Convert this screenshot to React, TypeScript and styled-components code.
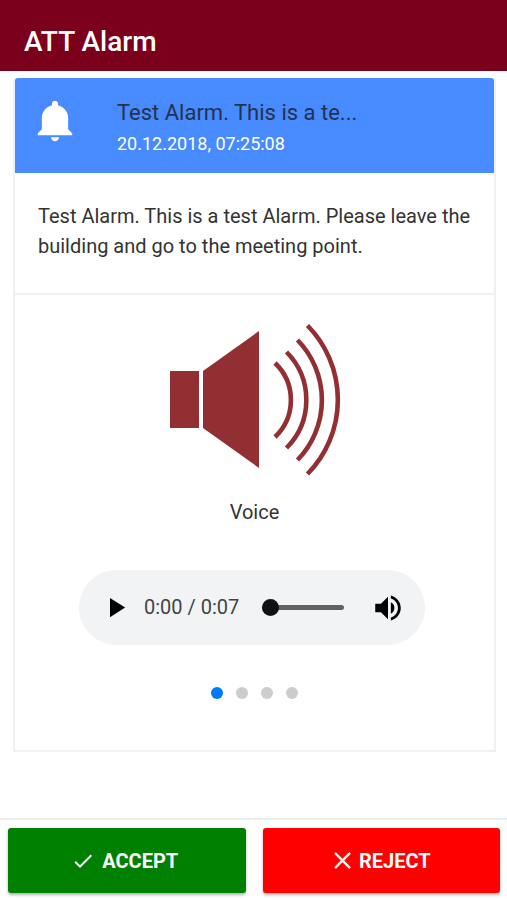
import React, { useState } from "react";
import styled, { createGlobalStyle } from "styled-components";
import { IoMdNotifications } from "react-icons/io";
import { MdCheck, MdClose, MdPlayArrow, MdVolumeUp } from "react-icons/md";

const GlobalStyle = createGlobalStyle`
  * { box-sizing: border-box; }
  body {
    margin: 0;
    background: #fff;
    color: #333;
    font-family: Roboto, "Liberation Sans", sans-serif;
  }
`;

const Page = styled.div`
  display: flex;
  flex-direction: column;
  min-height: 100vh;
`;

const TopBar = styled.header`
  padding: 24px 24px 11px;
  background: #7b001c;
`;

const AppTitle = styled.h1`
  margin: 0;
  color: #fff;
  font-size: 28px;
  font-weight: 500;
  line-height: 36px;
`;

const Content = styled.main`
  flex: 1;
  padding: 7px 11px 24px 13px;
`;

const Card = styled.article`
  border: 2px solid #f0f0f0;
  border-top: 0;
  border-radius: 4px 4px 0 0;
`;

const CardHeader = styled.header`
  display: flex;
  align-items: flex-start;
  gap: 37px;
  padding: 17px 16px 16px 15px;
  border-radius: 3px 3px 0 0;
  background: #488aff;
  color: #fff;
`;

const Bell = styled(IoMdNotifications)`
  flex: none;
  margin-top: 1px;
`;

const HeaderText = styled.div`
  display: flex;
  flex-direction: column;
  min-width: 0;
`;

const AlarmTitle = styled.h2`
  margin: 0;
  color: #24324c;
  font-size: 22px;
  font-weight: 400;
  line-height: 36px;
`;

const AlarmTime = styled.time`
  font-size: 18px;
  line-height: 26px;
`;

const Message = styled.p`
  margin: 0;
  padding: 28px 16px 32px 23px;
  border-bottom: 2px solid #f0f0f0;
  font-size: 20px;
  line-height: 30px;
`;

const Slide = styled.section`
  display: flex;
  flex-direction: column;
  align-items: center;
  padding: 28px 16px 51px;
`;

const Speaker = styled.svg`
  width: 172px;
  height: 154px;
`;

const SlideLabel = styled.h3`
  margin: 20px 0 43px;
  font-size: 20px;
  font-weight: 400;
  line-height: 30px;
`;

const Player = styled.div`
  display: flex;
  align-items: center;
  width: 346px;
  max-width: 100%;
  height: 75px;
  margin-right: 5px;
  padding: 0 20px;
  border-radius: 38px;
  background: #f1f3f4;
`;

const PlayerButton = styled.button`
  display: flex;
  padding: 0;
  border: 0;
  background: none;
  color: #000;
  cursor: pointer;
`;

const Elapsed = styled.span`
  margin: 0 23px 0 12px;
  padding-bottom: 2px;
  color: #444;
  font-size: 20px;
  line-height: 24px;
  white-space: nowrap;
`;

const Seek = styled.input`
  flex: 1;
  min-width: 0;
  height: 18px;
  margin: 0 27px 0 0;
  appearance: none;
  background: none;

  &::-webkit-slider-runnable-track {
    height: 5px;
    border-radius: 3px;
    background: #606162;
  }

  &::-webkit-slider-thumb {
    appearance: none;
    width: 17px;
    height: 17px;
    margin-top: -6px;
    border-radius: 50%;
    background: #111;
  }
`;

const Dots = styled.nav`
  display: flex;
  gap: 13px;
  margin-top: 42px;
`;

const Dot = styled.button<{ $active: boolean }>`
  width: 12px;
  height: 12px;
  padding: 0;
  border: 0;
  border-radius: 50%;
  background: ${(p) => (p.$active ? "#007aff" : "#ccc")};
  cursor: pointer;
`;

const ActionBar = styled.footer`
  display: flex;
  gap: 17px;
  padding: 8px 7px 7px 8px;
  border-top: 2px solid #eee;
`;

const Action = styled.button<{ $color: string; $gap: number }>`
  display: flex;
  flex: 1;
  align-items: center;
  justify-content: center;
  gap: ${(p) => p.$gap}px;
  height: 65px;
  padding: 0 4px 0 0;
  border: 0;
  border-radius: 3px;
  background: ${(p) => p.$color};
  box-shadow: 0 2px 3px rgba(0, 0, 0, 0.3);
  color: #fff;
  font-family: inherit;
  font-size: 20px;
  font-weight: 700;
  cursor: pointer;
`;

const slides = ["Voice", "Slide 2", "Slide 3", "Slide 4"];

export default function App() {
  const [active, setActive] = useState(0);
  const [position, setPosition] = useState(0);

  return (
    <Page>
      <GlobalStyle />
      <TopBar>
        <AppTitle>ATT Alarm</AppTitle>
      </TopBar>
      <Content>
        <Card>
          <CardHeader>
            <Bell size={50} aria-hidden />
            <HeaderText>
              <AlarmTitle>Test Alarm. This is a te...</AlarmTitle>
              <AlarmTime dateTime="2018-12-20T07:25:08">20.12.2018, 07:25:08</AlarmTime>
            </HeaderText>
          </CardHeader>
          <Message>
            Test Alarm. This is a test Alarm. Please leave the building and go to the meeting point.
          </Message>
          <Slide>
            <Speaker viewBox="0 0 172 154" aria-hidden>
              <g fill="#922f33">
                <path d="M1 48h29v57H1z" />
                <path d="M34 48L90 8v137L34 105z" />
              </g>
              <g fill="none" stroke="#922f33" strokeWidth="4.6">
                <path d="M106 40A51 51 0 0 1 106 114" />
                <path d="M117.500 29A68 68 0 0 1 117.500 125" />
                <path d="M128.500 17A86 86 0 0 1 128.500 137" />
                <path d="M138.500 2.500A106 106 0 0 1 138.500 151" />
              </g>
            </Speaker>
            <SlideLabel>Voice</SlideLabel>
            <Player>
              <PlayerButton type="button" aria-label="Play">
                <MdPlayArrow size={33} />
              </PlayerButton>
              <Elapsed>0:00 / 0:07</Elapsed>
              <Seek
                type="range"
                aria-label="Seek"
                min={0}
                max={7}
                value={position}
                onChange={(e) => setPosition(Number(e.target.value))}
              />
              <PlayerButton type="button" aria-label="Mute">
                <MdVolumeUp size={34} />
              </PlayerButton>
            </Player>
            <Dots aria-label="Slides">
              {slides.map((name, i) => (
                <Dot
                  key={name}
                  type="button"
                  aria-label={name}
                  $active={i === active}
                  onClick={() => setActive(i)}
                />
              ))}
            </Dots>
          </Slide>
        </Card>
      </Content>
      <ActionBar>
        <Action type="button" $color="#008000" $gap={7}>
          <MdCheck size={24} aria-hidden />
          ACCEPT
        </Action>
        <Action type="button" $color="#ff0000" $gap={2}>
          <MdClose size={29} aria-hidden />
          REJECT
        </Action>
      </ActionBar>
    </Page>
  );
}
